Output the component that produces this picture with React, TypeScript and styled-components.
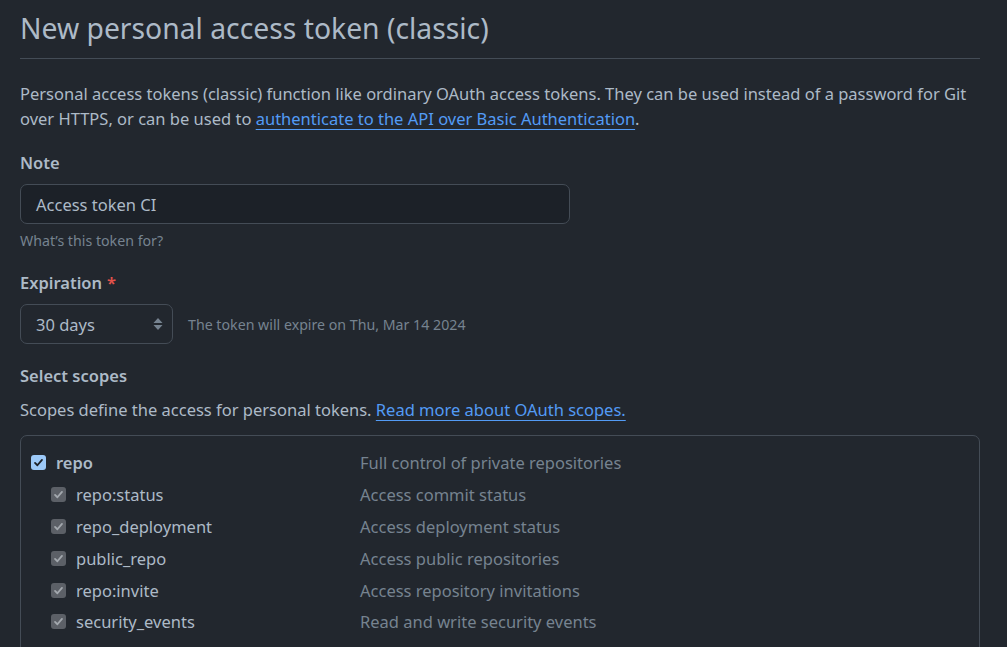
import React, { FC } from 'react';
import styled, { createGlobalStyle } from 'styled-components';

const GlobalStyle = createGlobalStyle`
  html, body {
    margin: 0;
    padding: 0;
    background: #22272e;
  }
  body {
    font-family: 'Noto Sans', 'Open Sans', sans-serif;
    color: #adbac7;
    font-size: 16.5px;
    line-height: 25px;
  }
`;

const Page = styled.main`
  padding: 0 27px 0 20px;
  width: 960px;
`;

const Header = styled.div`
  padding-top: 9px;
  padding-bottom: 11px;
  border-bottom: 1px solid #444c56;
`;

const Title = styled.h1`
  margin: 0;
  font-size: 28.3px;
  line-height: 38px;
  font-weight: 400;
  color: #adbac7;
`;

const Intro = styled.p`
  margin: 22px 0 0;
`;

const Link = styled.a`
  color: #539bf5;
  text-decoration: underline;
  text-underline-offset: 4px;
`;

const Field = styled.div`
  margin-top: 19px;
`;

const Label = styled.div`
  font-weight: 600;
  margin-bottom: 9px;
`;

const Required = styled.span`
  color: #e5534b;
  margin-left: 5px;
`;

const TextInput = styled.div`
  box-sizing: border-box;
  width: 550px;
  height: 40px;
  padding: 0 15px;
  display: flex;
  align-items: center;
  background: #1c2128;
  border: 1px solid #444c56;
  border-radius: 7px;
`;

const Hint = styled.div`
  margin-top: 7px;
  font-size: 14.2px;
  line-height: 20px;
  color: #768390;
`;

const Row = styled.div`
  display: flex;
  align-items: center;
  gap: 15px;
`;

const Select = styled.div`
  box-sizing: border-box;
  width: 153px;
  height: 40px;
  padding: 0 8px 0 15px;
  display: flex;
  align-items: center;
  justify-content: space-between;
  background: #22272e;
  border: 1px solid #444c56;
  border-radius: 7px;
`;

const InlineHint = styled.span`
  font-size: 14.2px;
  color: #768390;
`;

const Description = styled.p`
  margin: 8px 0 0;
`;

const ScopeBox = styled.div`
  margin-top: 13px;
  border: 1px solid #444c56;
  border-radius: 7px;
  padding: 11px 10px 0;
`;

const ScopeGroup = styled.div<{ divided?: boolean }>`
  padding-bottom: 10px;
  border-top: ${(p) => (p.divided ? '1px solid #444c56' : 'none')};
  margin: ${(p) => (p.divided ? '0 -10px' : '0')};
  padding-left: ${(p) => (p.divided ? '10px' : '0')};
  padding-top: ${(p) => (p.divided ? '10px' : '0')};
`;

const ScopeRow = styled.div`
  display: grid;
  grid-template-columns: 329px 1fr;
  height: 31.8px;
  align-items: center;
`;

const ScopeName = styled.label<{ child?: boolean }>`
  display: flex;
  align-items: center;
  gap: 10px;
  font-weight: ${(p) => (p.child ? 400 : 600)};
  padding-left: ${(p) => (p.child ? '20px' : '0')};
`;

const ScopeDesc = styled.span`
  color: #768390;
`;

const Box = styled.span<{ disabled?: boolean }>`
  width: 15px;
  height: 15px;
  border-radius: 3px;
  display: inline-flex;
  align-items: center;
  justify-content: center;
  background: ${(p) => (p.disabled ? '#5c6067' : '#9cc9f8')};
  color: ${(p) => (p.disabled ? '#a3a8ae' : '#1c2128')};
  flex-shrink: 0;
`;

const Check: FC<{ disabled?: boolean }> = ({ disabled }) => (
  <Box disabled={disabled}>
    <svg width="11" height="11" viewBox="0 0 12 12" fill="none">
      <path
        d="M2.2 6.4 L4.8 9 L9.8 3.2"
        stroke="currentColor"
        strokeWidth="2"
        strokeLinecap="round"
        strokeLinejoin="round"
      />
    </svg>
  </Box>
);

const SelectArrows = () => (
  <svg width="12" height="16" viewBox="0 0 12 16" fill="#768390">
    <path d="M6 2 L10.5 7 H1.5 Z" />
    <path d="M6 14 L10.5 9 H1.5 Z" />
  </svg>
);

const repoScopes = [
  { name: 'repo:status', desc: 'Access commit status' },
  { name: 'repo_deployment', desc: 'Access deployment status' },
  { name: 'public_repo', desc: 'Access public repositories' },
  { name: 'repo:invite', desc: 'Access repository invitations' },
  { name: 'security_events', desc: 'Read and write security events' },
];

const App: FC = () => {
  return (
    <>
      <GlobalStyle />
      <Page>
        <Header>
          <Title>New personal access token (classic)</Title>
        </Header>
        <Intro>
          Personal access tokens (classic) function like ordinary OAuth access tokens. They can be used instead of a
          password for Git over HTTPS, or can be used to{' '}
          <Link href="#">authenticate to the API over Basic Authentication</Link>.
        </Intro>

        <Field>
          <Label>Note</Label>
          <TextInput>Access token CI</TextInput>
          <Hint>What’s this token for?</Hint>
        </Field>

        <Field>
          <Label>
            Expiration<Required>*</Required>
          </Label>
          <Row>
            <Select>
              <span>30 days</span>
              <SelectArrows />
            </Select>
            <InlineHint>The token will expire on Thu, Mar 14 2024</InlineHint>
          </Row>
        </Field>

        <Field>
          <Label>Select scopes</Label>
          <Description>
            Scopes define the access for personal tokens.{' '}
            <Link href="#">Read more about OAuth scopes.</Link>
          </Description>
          <ScopeBox>
            <ScopeGroup>
              <ScopeRow>
                <ScopeName>
                  <Check />
                  repo
                </ScopeName>
                <ScopeDesc>Full control of private repositories</ScopeDesc>
              </ScopeRow>
              {repoScopes.map((s) => (
                <ScopeRow key={s.name}>
                  <ScopeName child>
                    <Check disabled />
                    {s.name}
                  </ScopeName>
                  <ScopeDesc>{s.desc}</ScopeDesc>
                </ScopeRow>
              ))}
            </ScopeGroup>
            <ScopeGroup divided>
              <ScopeRow>
                <ScopeName>
                  <Check />
                  workflow
                </ScopeName>
                <ScopeDesc>Update GitHub Action workflows</ScopeDesc>
              </ScopeRow>
            </ScopeGroup>
          </ScopeBox>
        </Field>
      </Page>
    </>
  );
};

export default App;
